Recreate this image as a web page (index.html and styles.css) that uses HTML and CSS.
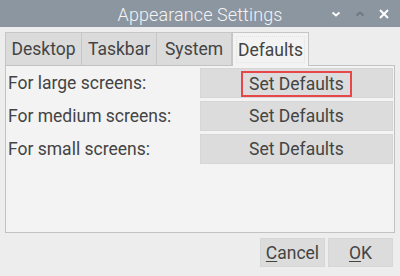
FILE: index.html
```html
<!DOCTYPE html>
<html>
<head>
<meta charset="utf-8">
<link rel="stylesheet" href="styles.css">
</head>
<body>
<div class="window">
  <div class="titlebar">
    <span class="title">Appearance Settings</span>
    <div class="controls">
      <svg class="ctl" width="12" height="8" viewBox="0 0 12 8"><path d="M2.5 2.5 L6 5.5 L9.5 2.5" fill="none" stroke="#ffffff" stroke-width="2"/></svg>
      <svg class="ctl dim" width="12" height="8" viewBox="0 0 12 8"><path d="M2.5 5.5 L6 2.5 L9.5 5.5" fill="none" stroke="#6f7882" stroke-width="2"/></svg>
      <svg class="ctl" width="12" height="12" viewBox="0 0 12 12"><path d="M2 2 L10 10 M10 2 L2 10" fill="none" stroke="#ffffff" stroke-width="2"/></svg>
    </div>
  </div>
  <div class="body">
    <div class="tabs">
      <div class="tab t1">Desktop</div>
      <div class="tab t2">Taskbar</div>
      <div class="tab t3">System</div>
      <div class="tab active"><span class="focus-dash">Defaults</span></div>
    </div>
    <div class="panel">
      <div class="row">
        <span class="label">For large screens:</span>
        <button class="btn wide"><span class="focus">Set Defaults</span></button>
      </div>
      <div class="row">
        <span class="label">For medium screens:</span>
        <button class="btn wide"><span class="plain">Set Defaults</span></button>
      </div>
      <div class="row">
        <span class="label">For small screens:</span>
        <button class="btn wide"><span class="plain">Set Defaults</span></button>
      </div>
    </div>
    <div class="actions">
      <button class="btn small"><u>C</u>ancel</button>
      <button class="btn small"><u>O</u>K</button>
    </div>
  </div>
</div>
</body>
</html>
```
FILE: styles.css
```css
* { box-sizing: border-box; }
html, body { margin: 0; padding: 0; }
body {
  width: 400px;
  height: 276px;
  overflow: hidden;
  font-family: Roboto, "Liberation Sans", sans-serif;
  background: #ededed;
}
.window {
  width: 400px;
  height: 276px;
  display: flex;
  flex-direction: column;
}
.titlebar {
  height: 27px;
  background: #8c96a0;
  position: relative;
  display: flex;
  align-items: center;
  justify-content: center;
}
.title {
  color: #f2f4f6;
  font-size: 18px;
  font-weight: 300;
  letter-spacing: 0.1px;
  margin-top: 1px;
}
.controls {
  position: absolute;
  right: 10px;
  top: 0;
  height: 27px;
  display: flex;
  align-items: center;
  gap: 12px;
}
.body {
  flex: 1;
  padding: 5px 5px 0 5px;
  display: flex;
  flex-direction: column;
}
.tabs {
  display: flex;
  height: 33px;
  align-items: flex-end;
}
.tab {
  height: 33px;
  background: #dbdbdb;
  border: 1px solid #c6c6c6;
  border-bottom: none;
  border-left: none;
  color: #444444;
  font-size: 17.5px;
  display: flex;
  align-items: center;
  justify-content: center;
}
.t1 { width: 77px; border-left: 1px solid #c6c6c6; }
.t2 { width: 75px; }
.t3 { width: 75px; }
.tab.active {
  width: 77px;
  background: #f3f3f3;
  height: 34px;
  margin-bottom: -1px;
  position: relative;
  z-index: 1;
  border-left: 1px solid #c6c6c6;
  padding: 3px;
}
.focus-dash {
  width: 100%;
  height: 100%;
  display: flex;
  align-items: center;
  justify-content: center;
  border: 1px dotted #e2e2e2;
}
.panel {
  height: 168px;
  background: #f3f3f3;
  border: 1px solid #c2c2c2;
  padding: 2px 1px 0 2px;
  display: flex;
  flex-direction: column;
  gap: 3px;
}
.row {
  display: flex;
  align-items: center;
  justify-content: space-between;
  height: 30px;
}
.label {
  color: #444444;
  font-size: 17.5px;
}
.btn {
  font-family: Roboto, "Liberation Sans", sans-serif;
  background: #dcdcdc;
  border: 1px solid #d6d6d6;
  color: #444444;
  font-size: 17.5px;
  padding: 0;
  margin: 0;
}
.btn.wide {
  width: 193px;
  height: 30px;
  display: flex;
  align-items: center;
  justify-content: center;
}
.btn .focus {
  width: 111px;
  height: 26px;
  margin-top: 2px;
  border: 2px solid #e8474a;
  display: flex;
  align-items: center;
  justify-content: center;
}
.btn .plain {
  display: flex;
  align-items: center;
  justify-content: center;
}
.actions {
  display: flex;
  justify-content: flex-end;
  gap: 3px;
  padding-top: 5px;
  padding-right: 2px;
}
.btn.small {
  width: 65px;
  height: 29px;
}
.btn u {
  text-decoration-thickness: 1px;
  text-underline-offset: 2px;
}
```
